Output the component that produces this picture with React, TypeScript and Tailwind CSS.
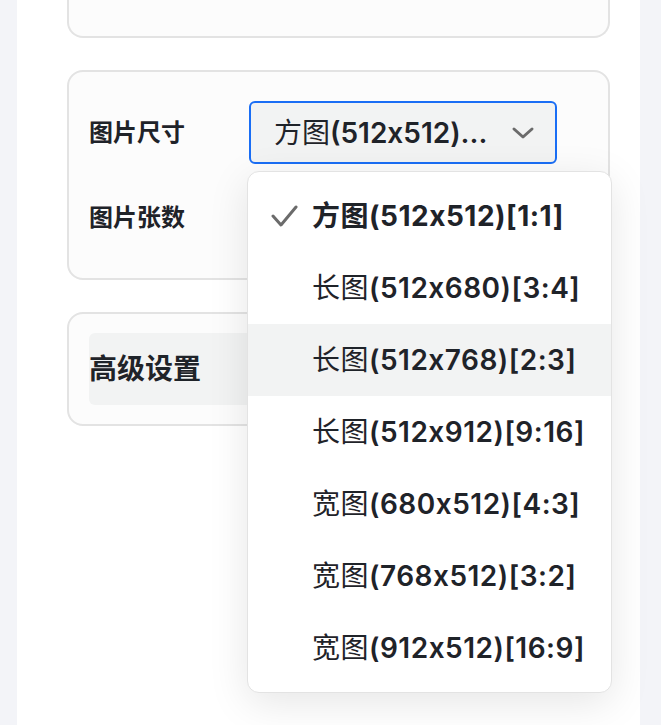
import { FC } from "react";

const options = [
  { shape: "方图", size: "(512x512)[1:1]" },
  { shape: "长图", size: "(512x680)[3:4]" },
  { shape: "长图", size: "(512x768)[2:3]" },
  { shape: "长图", size: "(512x912)[9:16]" },
  { shape: "宽图", size: "(680x512)[4:3]" },
  { shape: "宽图", size: "(768x512)[3:2]" },
  { shape: "宽图", size: "(912x512)[16:9]" },
];

const Check = () => (
  <svg width="28" height="24" viewBox="0 0 28 24" fill="none">
    <polyline
      points="3,12 11,21 26,3"
      stroke="#6b6b6b"
      strokeWidth="3"
      strokeLinecap="round"
      strokeLinejoin="round"
    />
  </svg>
);

const Chevron = () => (
  <svg width="24" height="16" viewBox="0 0 24 16" fill="none">
    <polyline
      points="3,4 12,12 21,4"
      stroke="#6b6b6b"
      strokeWidth="3"
      strokeLinecap="round"
      strokeLinejoin="round"
    />
  </svg>
);

const Dropdown: FC = () => {
  const selected = 0;
  const hovered = 2;

  return (
    <div className="absolute left-[-2px] top-[70px] z-10 w-[365px] rounded-[12px] border border-[#e3e3e3] bg-white py-[8px] shadow-[0_10px_40px_rgba(0,0,0,0.10)]">
      {options.map((o, i) => (
        <div
          key={i}
          className={`flex h-[72px] items-center ${i === hovered ? "bg-[#f2f3f3]" : ""}`}
        >
          <div className="flex w-[64px] justify-end pr-[14px]">
            {i === selected && <Check />}
          </div>
          <p className="text-[28px] tracking-[0.5px] text-[#1f2329]">
            <span className={i === selected ? "font-bold" : "font-normal"}>{o.shape}</span>
            <span className={i === selected ? "font-bold" : "font-semibold"}>{o.size}</span>
          </p>
        </div>
      ))}
    </div>
  );
};

export default function App() {
  return (
    <div className="flex h-[725px] w-full overflow-hidden bg-[#f3f4f8] pl-[17px] pr-[21px] font-['Inter','Noto_Sans_CJK_SC',sans-serif]">
      <div className="flex w-full flex-col gap-[32px] bg-white pl-[50px] pr-[30px]">
        <div className="h-[38px] rounded-b-[16px] border-2 border-t-0 border-[#e3e3e3] bg-[#fcfcfc]" />

        <div className="flex flex-col gap-[22px] rounded-[16px] border-2 border-[#e3e3e3] bg-[#fcfcfc] px-[20px] py-[29px]">
          <div className="flex h-[63px] items-center">
            <span className="w-[160px] text-[24px] font-bold text-[#1f2329]">图片尺寸</span>
            <div className="relative">
              <div className="flex h-[63px] w-[308px] items-center justify-between rounded-[6px] border-2 border-[#1a6ef5] bg-[#f2f3f3] pl-[23px] pr-[20px]">
                <p className="text-[28px] text-[#1f2329]">
                  <span className="font-normal">方图</span>
                  <span className="font-semibold">(512x512)...</span>
                </p>
                <Chevron />
              </div>
              <Dropdown />
            </div>
          </div>
          <div className="flex h-[63px] items-center">
            <span className="w-[160px] text-[24px] font-bold text-[#1f2329]">图片张数</span>
          </div>
        </div>

        <div className="rounded-[16px] border-2 border-[#e3e3e3] bg-[#fcfcfc] px-[20px] py-[19px]">
          <div className="flex h-[72px] items-center rounded-[6px] bg-[#f2f3f3]">
            <span className="text-[28px] font-bold text-[#1f2329]">高级设置</span>
          </div>
        </div>
      </div>
    </div>
  );
}
